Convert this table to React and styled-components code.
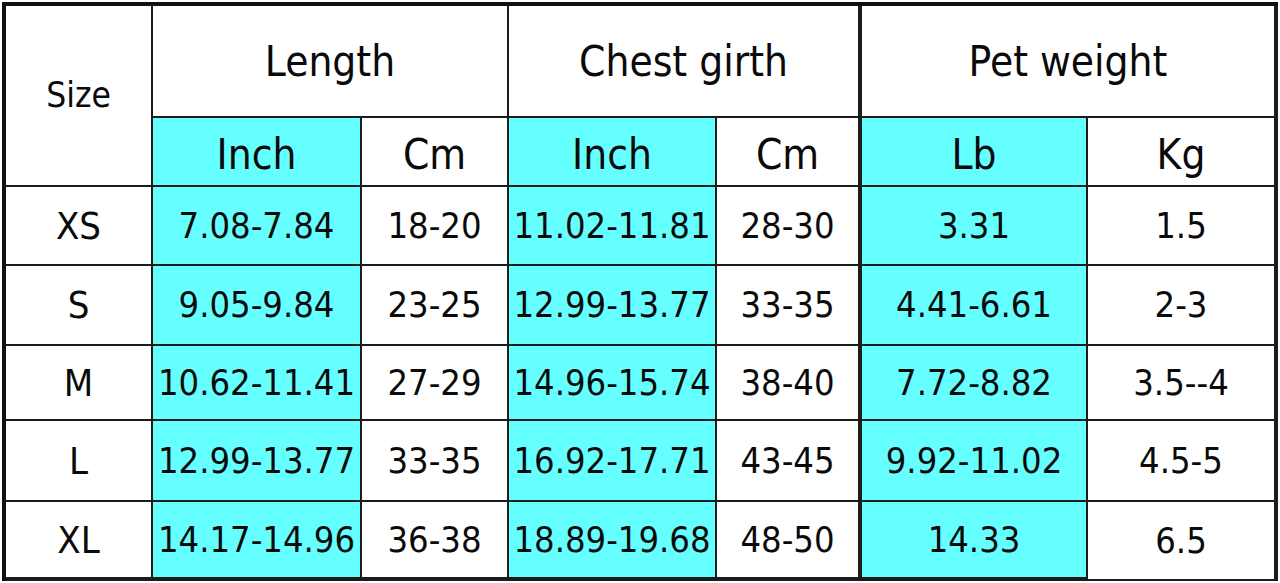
import React from "react";
import styled, { createGlobalStyle } from "styled-components";

const Global = createGlobalStyle`
  html, body { margin: 0; padding: 0; background: #fff; }
  body { font-family: "DejaVu Sans Condensed", "DejaVu Sans", sans-serif; font-stretch: condensed; }
`;

const Sheet = styled.div`
  padding: 2px 0 0 2px;
  width: 1278px;
  box-sizing: border-box;
`;

const Grid = styled.div`
  display: grid;
  grid-template-columns: 147px 209px 147px 208px 145px 226px 190px;
  grid-template-rows: 112px 69px 79px 80px 75px 81px 79px;
  border-top: 4px solid #111;
  border-left: 4px solid #111;
  width: max-content;
`;

const Cell = styled.div`
  box-sizing: border-box;
  display: flex;
  align-items: center;
  justify-content: center;
  padding-top: ${(p) => p.$shift || 0}px;
  background: ${(p) => (p.$cyan ? "#66ffff" : "#ffffff")};
  border-right: ${(p) => (p.$thickRight ? "4px" : "2px")} solid #1c1c1c;
  border-bottom: ${(p) => (p.$thickBottom ? "4px" : "2px")} solid #1c1c1c;
  color: #0a0a0a;
  font-size: ${(p) => p.$size || 36}px;
  line-height: 1;
  white-space: nowrap;
  grid-column: ${(p) => p.$col || "auto"};
  grid-row: ${(p) => p.$row || "auto"};
`;

const rows = [
  ["XS", "7.08-7.84", "18-20", "11.02-11.81", "28-30", "3.31", "1.5"],
  ["S", "9.05-9.84", "23-25", "12.99-13.77", "33-35", "4.41-6.61", "2-3"],
  ["M", "10.62-11.41", "27-29", "14.96-15.74", "38-40", "7.72-8.82", "3.5--4"],
  ["L", "12.99-13.77", "33-35", "16.92-17.71", "43-45", "9.92-11.02", "4.5-5"],
  ["XL", "14.17-14.96", "36-38", "18.89-19.68", "48-50", "14.33", "6.5"],
];

const cyanCols = [1, 3, 5];
const thickRightCols = [4, 6];

export default function App() {
  return (
    <Sheet>
      <Global />
      <Grid>
        <Cell $row="1 / span 2" $col="1" $size={35}>Size</Cell>
        <Cell $col="2 / span 2" $size={42} $shift={2}>Length</Cell>
        <Cell $col="4 / span 2" $size={42} $shift={2} $thickRight>Chest girth</Cell>
        <Cell $col="6 / span 2" $size={42} $shift={2} $thickRight>Pet weight</Cell>
        <Cell $cyan $size={42} $shift={6}>Inch</Cell>
        <Cell $size={42} $shift={6}>Cm</Cell>
        <Cell $cyan $size={42} $shift={6}>Inch</Cell>
        <Cell $size={42} $shift={6} $thickRight>Cm</Cell>
        <Cell $cyan $size={42} $shift={6}>Lb</Cell>
        <Cell $size={42} $shift={6} $thickRight>Kg</Cell>
        {rows.map((r, ri) =>
          r.map((v, ci) => (
            <Cell
              key={`${ri}-${ci}`}
              $cyan={cyanCols.includes(ci)}
              $thickRight={thickRightCols.includes(ci)}
              $thickBottom={ri === rows.length - 1 && ci < 6}
              $size={ci === 0 ? 38 : 36}
            >
              {v}
            </Cell>
          ))
        )}
      </Grid>
    </Sheet>
  );
}
